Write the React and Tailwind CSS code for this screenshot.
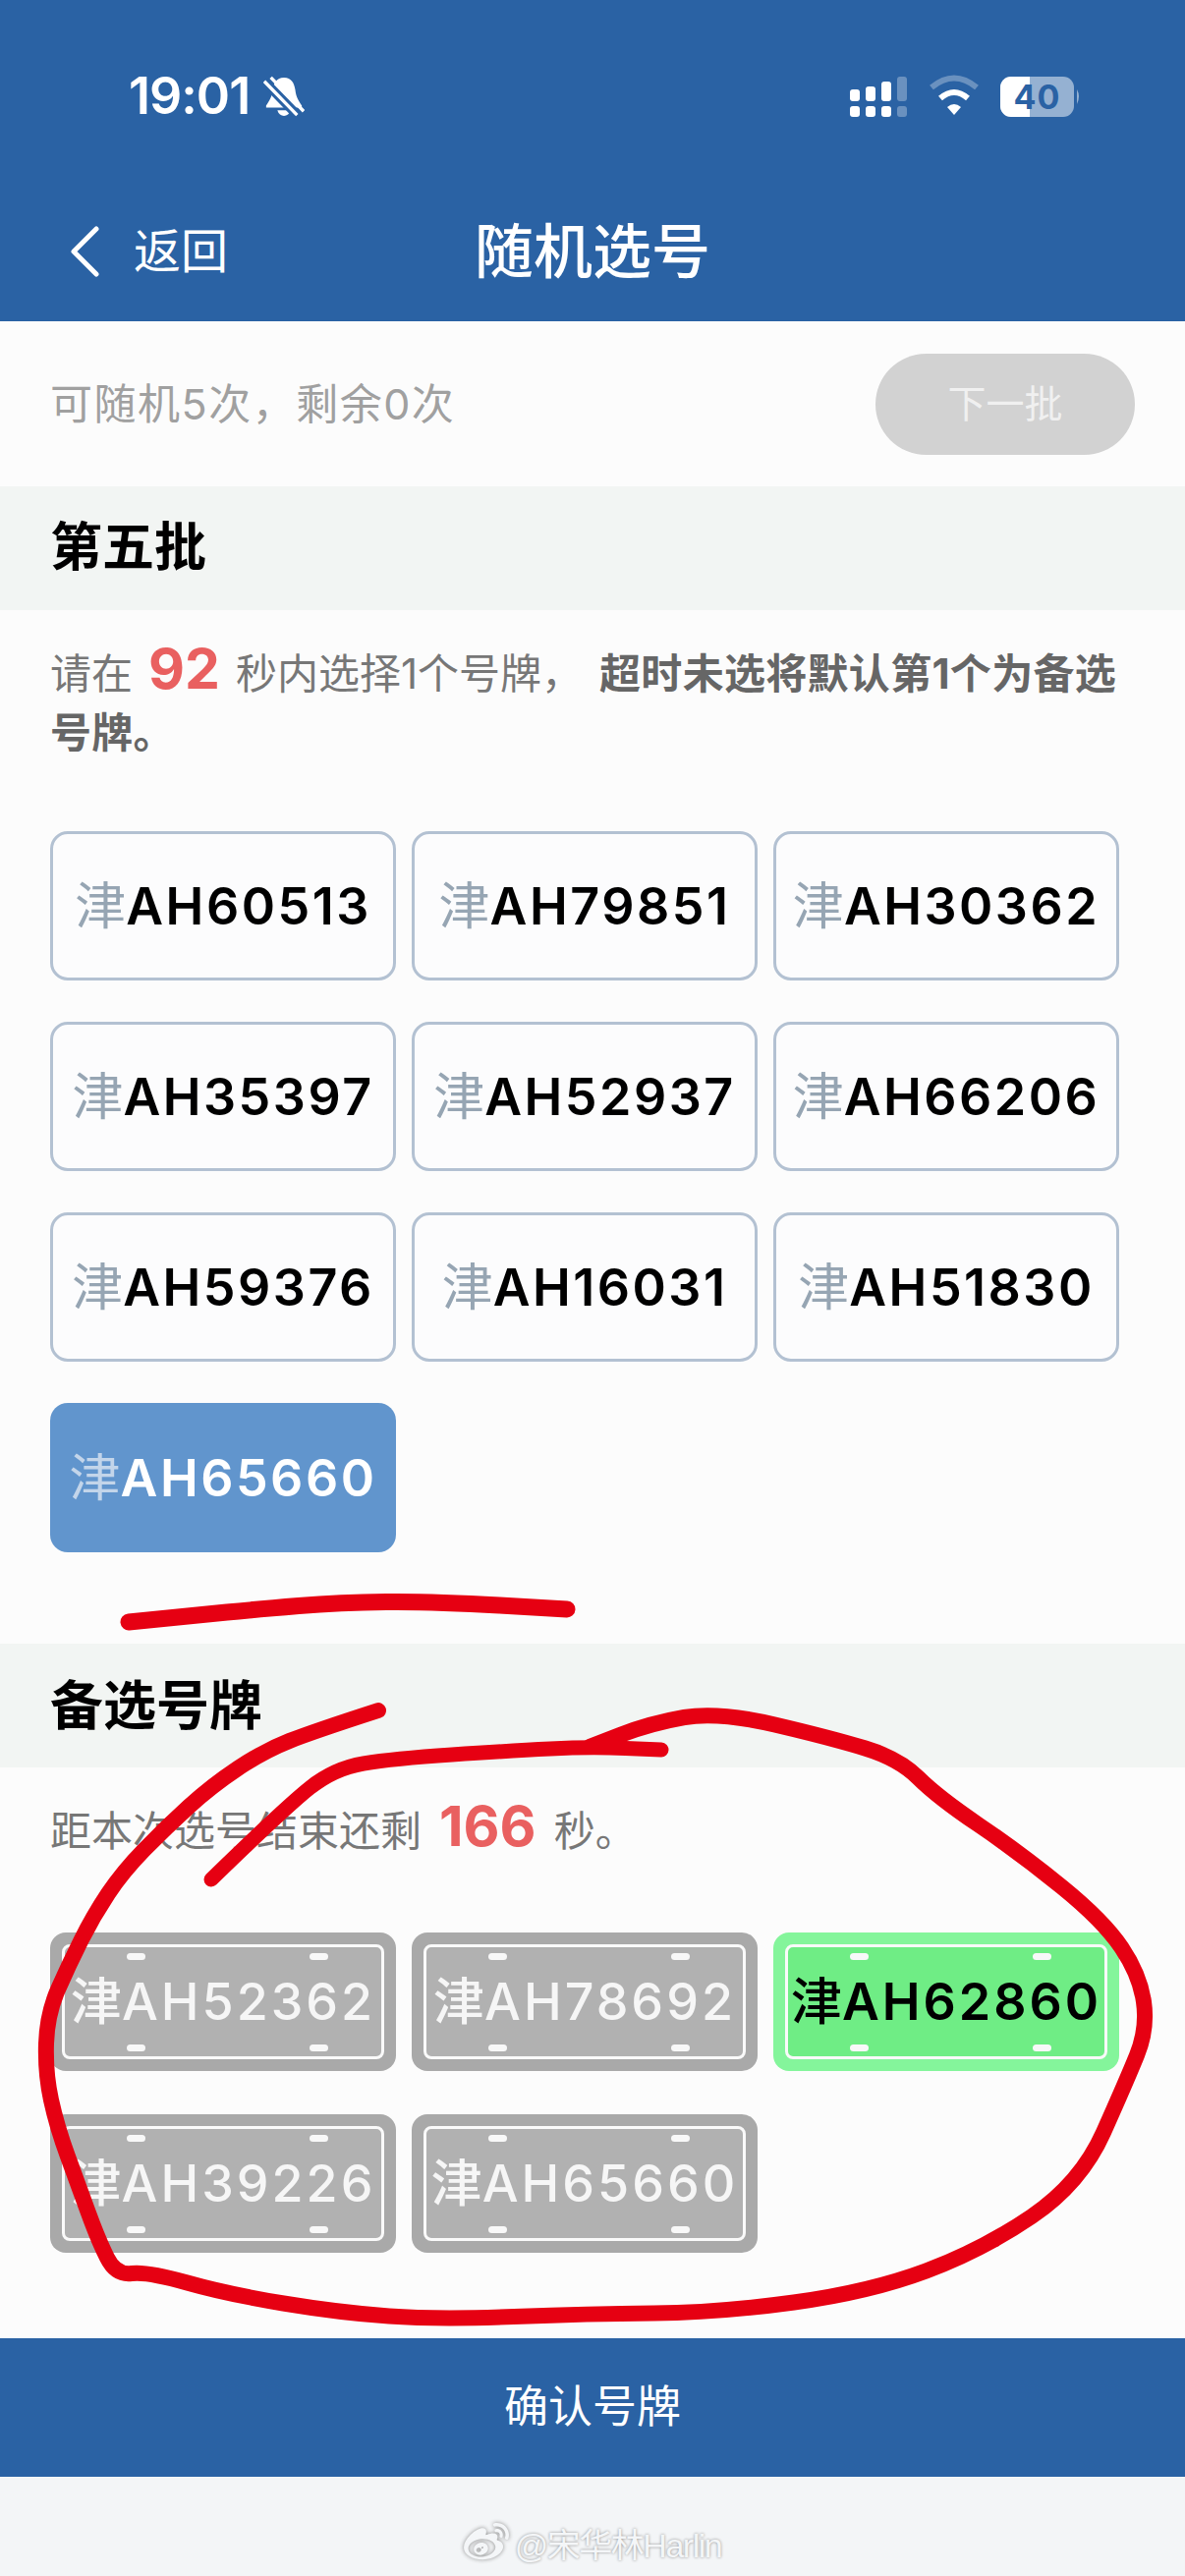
import { FaWeibo } from 'react-icons/fa';

const CJK = '[font-family:Inter,"Noto_Sans_CJK_SC",sans-serif]';

const BATCH = ['60513', '79851', '30362', '35397', '52937', '66206', '59376', '16031', '51830', '65660'];
const PICKED = [
  { no: '52362' },
  { no: '78692' },
  { no: '62860', active: true },
  { no: '39226' },
  { no: '65660' },
];

// marker strokes scribbled over the page, as through-points
const UNDERLINE = [[131, 1651], [200, 1644], [262, 1638], [346, 1631], [440, 1630], [577, 1638]];
const LOOP = [
  [385, 1741], [320, 1762], [269, 1782], [215, 1818], [169, 1860], [125, 1905], [95, 1950], [70, 2000], [48, 2050], [46, 2110], [58, 2165], [80, 2225], [100, 2280], [118, 2316],
  [150, 2312], [231, 2335], [346, 2354], [446, 2361], [600, 2355], [731, 2354], [885, 2333], [1000, 2290], [1100, 2222], [1146, 2119], [1168, 2065], [1160, 2010],
  [1123, 1955], [1038, 1886], [954, 1829], [915, 1790], [846, 1769], [731, 1742], [662, 1754], [600, 1778],
];
const INNER = [[215, 1913], [290, 1840], [340, 1800], [400, 1790], [520, 1782], [600, 1778], [673, 1781]];

function smooth(points) {
  let d = `M${points[0][0]} ${points[0][1]}`;
  for (let i = 1; i < points.length - 1; i++) {
    const [x, y] = points[i];
    const [nx, ny] = points[i + 1];
    d += ` Q${x} ${y} ${(x + nx) / 2} ${(y + ny) / 2}`;
  }
  const last = points[points.length - 1];
  return `${d} L${last[0]} ${last[1]}`;
}

function Bolt({ className }) {
  return <span className={`absolute w-[19px] h-[7px] rounded-full bg-[#f8f8f8] ${className}`} />;
}

function BatchPlate({ no, selected }) {
  return (
    <div className={`h-[152px] rounded-[18px] pt-[2px] flex items-center justify-center text-[52px] font-semibold tracking-[2.5px] ${selected ? 'bg-[#6195cd] text-white' : 'bg-[#fcfcfd] border-[3px] border-[#b3c1d2] text-black'}`}>
      <span className={`font-normal tracking-normal ${selected ? 'text-[#c3d5ea]' : 'text-[#96a5b3]'}`}>津</span>AH{no}
    </div>
  );
}

function LicensePlate({ no, active }) {
  return (
    <div className={`relative h-[141px] rounded-[16px] p-[12px] ${active ? 'bg-[#84f59b]' : 'bg-[#a9a9a9]'}`}>
      <div className={`h-full rounded-[8px] border-[3px] border-[#fafafa] flex items-center justify-center text-[52px] tracking-[3px] ${active ? 'bg-[#6fed85] text-black font-semibold' : 'bg-[#b1b1b1] text-[#f6f6f6] font-medium'}`}>
        <span className="font-medium tracking-normal">津</span>AH{no}
      </div>
      <Bolt className="left-[78px] top-[21px]" />
      <Bolt className="left-[264px] top-[21px]" />
      <Bolt className="left-[78px] bottom-[20px]" />
      <Bolt className="left-[264px] bottom-[20px]" />
    </div>
  );
}

function StatusIcons() {
  return (
    <svg width="240" height="45" viewBox="865 75 240 45" fill="#fff">
      <rect x="865" y="90" width="10" height="12" rx="3" />
      <rect x="881" y="87" width="10" height="15" rx="3" />
      <rect x="897" y="82" width="10" height="20" rx="3" />
      <rect x="913" y="77" width="10" height="25" rx="3" opacity="0.3" />
      <rect x="865" y="107" width="10" height="11" rx="3" />
      <rect x="881" y="107" width="10" height="11" rx="3" />
      <rect x="897" y="107" width="10" height="11" rx="3" />
      <rect x="913" y="107" width="10" height="11" rx="3" opacity="0.3" />
      {/* wifi */}
      <path d="M948 88 Q971 69 994 88" fill="none" stroke="#fff" strokeOpacity="0.3" strokeWidth="6" />
      <path d="M957 99 Q971 87 985 99" fill="none" stroke="#fff" strokeWidth="6" />
      <path d="M964 108 Q971 102 978 108 L971 116Z" />
      {/* battery */}
      <rect x="1018" y="77" width="75" height="41" rx="11" fill="#fff" fillOpacity="0.5" />
      <path d="M1029 77H1048V118H1029A11 11 0 0 1 1018 107V88A11 11 0 0 1 1029 77Z" />
      <path d="M1096 90Q1100 97 1096 105Z" fillOpacity="0.5" />
      <text x="1055.5" y="110" textAnchor="middle" fontFamily="Inter" fontWeight="700" fontSize="34" fill="#2a62a4" letterSpacing="1">40</text>
    </svg>
  );
}

export default function App() {
  return (
    <div className={`relative w-[1206px] h-[2622px] overflow-hidden bg-[#fcfcfc] ${CJK}`} lang="zh-CN">
      {/* Top bar */}
      <header className="h-[327px] bg-[#2a62a4] text-white">
        <div className="h-[196px] pl-[131px] pr-[101px] flex items-center justify-between">
          <div className="flex items-center gap-[14px]">
            <span className="text-[52px] font-semibold tracking-[-1px] leading-none">19:01</span>
            <svg width="42" height="42" viewBox="0 0 44 42" fill="#fff">
              <path d="M22 1c8 0 11 6 12 13 1 8 3 11 7 17v2H3v-2c4-6 6-9 7-17 1-7 4-13 12-13Z" />
              <path d="M15 36h14c-1 4-4 6-7 6s-6-2-7-6Z" />
              <path d="M1 5 36 41" stroke="#2a62a4" strokeWidth="10" />
              <path d="M1 5 36 41M8 1 43 37" stroke="#fff" strokeWidth="3.5" />
            </svg>
          </div>
          <StatusIcons />
        </div>
        <div className="relative h-[131px] flex items-center justify-center pb-[11px]">
          <div className="absolute left-[71px] top-[34px] flex items-center gap-[35px]">
            <svg width="30" height="52" viewBox="0 0 30 52" fill="none" stroke="#fff" strokeWidth="5" strokeLinecap="round" strokeLinejoin="round">
              <path d="M27 3 4 26l23 23" />
            </svg>
            <span className="text-[48px] leading-none font-normal">返回</span>
          </div>
          <h1 className="text-[60px] leading-none font-medium">随机选号</h1>
        </div>
      </header>

      {/* Quota row */}
      <div className="h-[168px] pl-[51px] pr-[51px] flex items-center justify-between">
        <p className="text-[43px] tracking-[1.5px] text-[#a0a0a0]">可随机5次，剩余0次</p>
        <button className="w-[264px] h-[103px] rounded-full bg-[#d2d2d2] text-[39px] text-[#f0f0f0]">下一批</button>
      </div>

      {/* Current batch */}
      <h2 className="h-[126px] bg-[#f2f5f3] pl-[51px] flex items-center text-[53px] font-bold text-black">第五批</h2>
      <p className="pt-[35px] pl-[51px] pr-[50px] text-[42px] leading-[60px] text-[#777]">
        请在<span className="mx-[16px] text-[57px] leading-[40px] font-bold text-[#e96060]">92</span>秒内选择1个号牌，<strong className="ml-[17px] font-bold tracking-[0.3px] text-[#666]">超时未选将默认第1个为备选号牌。</strong>
      </p>
      <div className="mt-[70px] pl-[51px] pr-[67px] grid grid-cols-3 gap-x-[16px] gap-y-[42px]">
        {BATCH.map((no, i) => (
          <BatchPlate key={no} no={no} selected={i === BATCH.length - 1} />
        ))}
      </div>

      {/* Backup plates */}
      <h2 className="mt-[93px] h-[126px] bg-[#f2f5f3] pl-[51px] flex items-center text-[54px] font-bold text-black">备选号牌</h2>
      <p className="pt-[35px] pl-[51px] text-[42px] leading-[60px] text-[#777]">
        距本次选号结束还剩<span className="mx-[18px] text-[57px] leading-[40px] font-bold text-[#e96060]">166</span>秒。
      </p>
      <div className="mt-[73px] pl-[51px] pr-[67px] grid grid-cols-3 gap-x-[16px] gap-y-[44px]">
        {PICKED.map((p) => (
          <LicensePlate key={p.no} no={p.no} active={p.active} />
        ))}
      </div>

      {/* Confirm */}
      <button className="mt-[87px] block w-full h-[141px] pb-[2px] bg-[#2a62a4] text-[45px] text-white">确认号牌</button>

      <div className="h-[102px] bg-[#f3f5f7] flex items-end justify-center pb-[12px] gap-[6px] text-[#f4f6f8] [text-shadow:0_0_3px_#8a8a8a]">
        <FaWeibo className="text-[46px] [filter:drop-shadow(0_0_2px_#8a8a8a)]" />
        <span className="text-[34px] leading-[40px] tracking-[-1.5px] [font-family:'Liberation_Sans','Noto_Sans_CJK_SC',sans-serif]">@宋华林Harlin</span>
      </div>

      {/* Red marker scribbles */}
      <svg className="absolute inset-0 pointer-events-none" width="1206" height="2622" fill="none" stroke="#e60012" strokeLinecap="round" strokeLinejoin="round">
        <path strokeWidth="17" d={smooth(UNDERLINE)} />
        <path strokeWidth="16" d={smooth(LOOP)} />
        <path strokeWidth="15" d={smooth(INNER)} />
      </svg>
    </div>
  );
}
